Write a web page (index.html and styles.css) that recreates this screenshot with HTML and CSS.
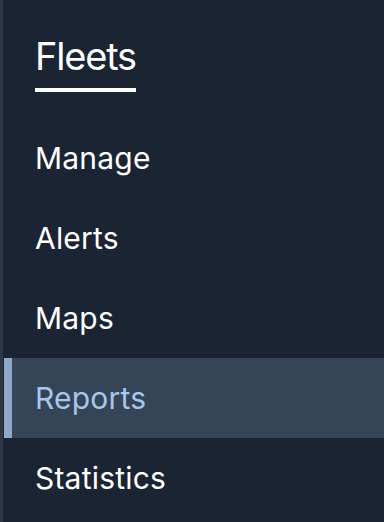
FILE: index.html
```html
<!DOCTYPE html>
<html lang="en">
<head>
<meta charset="utf-8">
<link rel="stylesheet" href="styles.css">
</head>
<body>
<nav class="sidebar">
  <div class="heading">
    <h1 class="title">Fleets</h1>
  </div>
  <ul class="menu">
    <li class="item">Manage</li>
    <li class="item">Alerts</li>
    <li class="item">Maps</li>
    <li class="item active">Reports</li>
    <li class="item">Statistics</li>
  </ul>
</nav>
</body>
</html>
```

FILE: styles.css
```css
html, body {
  margin: 0;
  padding: 0;
  height: 100%;
  background: #1b2433;
}
body {
  font-family: Inter, "Noto Sans", sans-serif;
  color: #ffffff;
}
.sidebar {
  height: 100%;
  border-left: 3px solid #2f3744;
  box-sizing: border-box;
}
.heading {
  padding: 32px 0 0 32px;
}
.title {
  display: inline-block;
  margin: 0;
  font-size: 38px;
  font-weight: 400;
  line-height: 48px;
  letter-spacing: -1.2px;
  padding-bottom: 8px;
  border-bottom: 4px solid #ffffff;
}
.menu {
  list-style: none;
  margin: 26px 0 0 0;
  padding: 0;
}
.item {
  height: 80px;
  display: flex;
  align-items: center;
  padding-left: 32px;
  font-size: 30px;
  letter-spacing: 0.2px;
  box-sizing: border-box;
}
.item.active {
  margin-left: 1px;
  padding-left: 23px;
  border-left: 8px solid #8ea8c6;
  background: #364457;
  color: #a7c7ec;
}
```
